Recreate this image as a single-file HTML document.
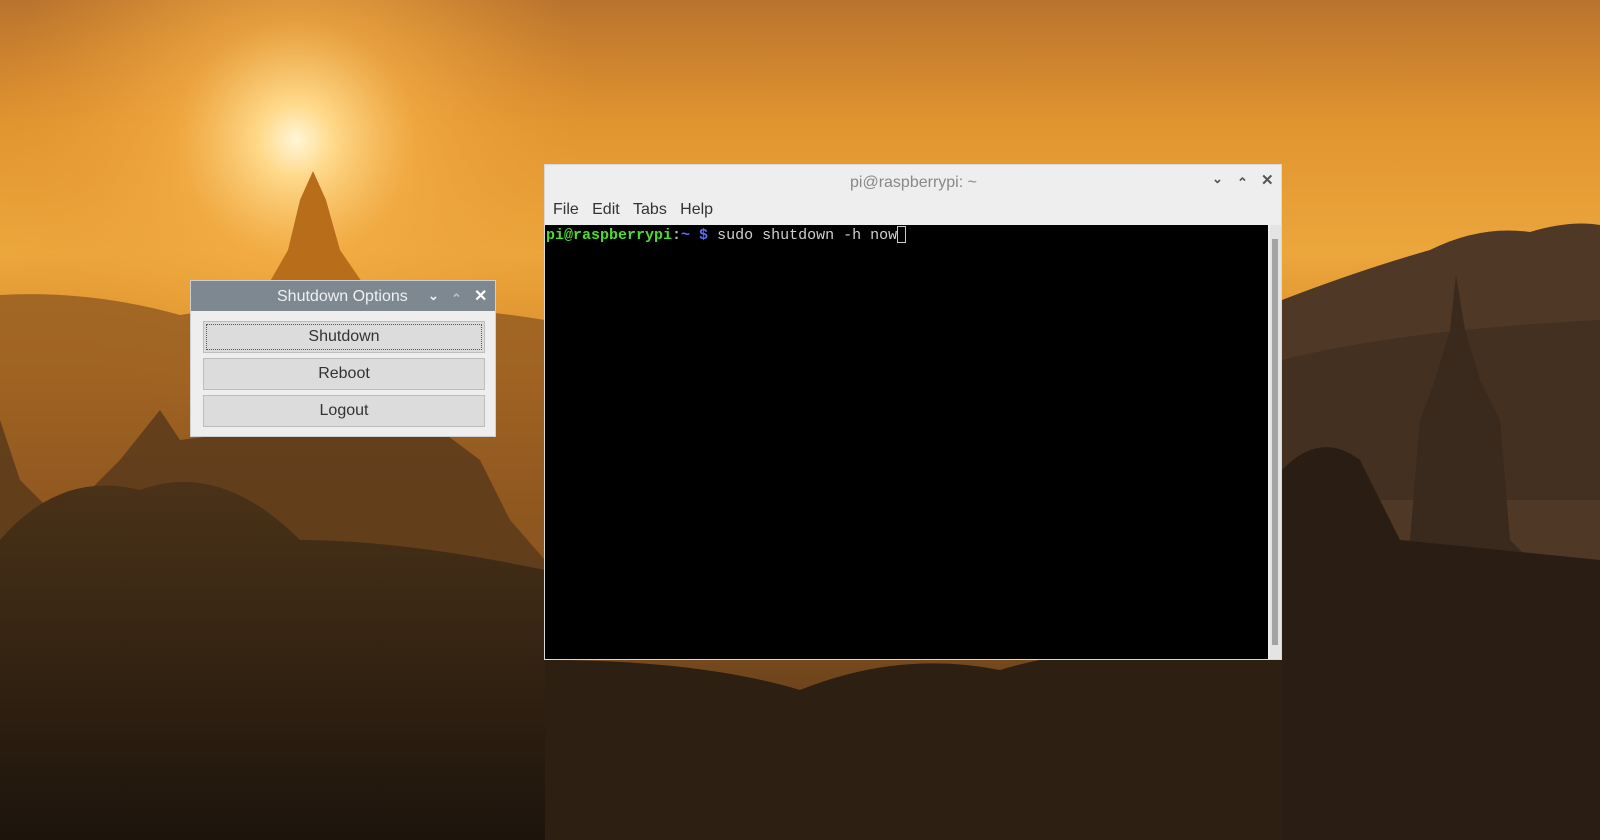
<!DOCTYPE html>
<html><head><style>
*{margin:0;padding:0;box-sizing:border-box}
body{width:1600px;height:840px;overflow:hidden;position:relative;font-family:"Liberation Sans",sans-serif;background:#2a1b10}
#bg{position:absolute;left:0;top:0}
.win{position:absolute;background:#eeeeee}
.t{position:absolute;color:#777;font-size:16px}
.ctl{position:absolute;font-size:13px;color:#555;font-weight:bold}
.btn{position:absolute;left:12px;width:282px;height:32px;background:#dcdcdc;border:1px solid #bdbdbd;font-size:16px;color:#333;text-align:center;line-height:30px}
</style></head><body>
<svg id="bg" width="1600" height="840" viewBox="0 0 1600 840">
<defs>
<linearGradient id="sky" x1="0" y1="0" x2="0" y2="1">
<stop offset="0" stop-color="#b9732e"/><stop offset="0.15" stop-color="#e2952f"/><stop offset="0.3" stop-color="#eba63c"/><stop offset="0.45" stop-color="#d98a2a"/><stop offset="0.6" stop-color="#9c5e22"/><stop offset="1" stop-color="#4a3018"/></linearGradient>
<radialGradient id="sun" cx="296" cy="140" r="300" gradientUnits="userSpaceOnUse">
<stop offset="0" stop-color="#fff6d8"/><stop offset="0.12" stop-color="#ffda8c"/><stop offset="0.4" stop-color="#f4ad45" stop-opacity="0.7"/><stop offset="1" stop-color="#e89a34" stop-opacity="0"/></radialGradient>
<linearGradient id="ground" x1="0" y1="0" x2="0" y2="1"><stop offset="0" stop-color="#4a3218"/><stop offset="1" stop-color="#1d140c"/></linearGradient>
</defs>
<rect width="1600" height="840" fill="url(#sky)"/>
<rect width="1600" height="840" fill="url(#sun)"/>
<path d="M0 295 Q90 290 180 315 L280 300 Q420 300 545 320 L545 840 L0 840Z" fill="#8c5520" opacity="0.75"/>
<path d="M1282 300 Q1360 270 1430 250 Q1480 225 1530 232 Q1570 220 1600 225 L1600 840 L1282 840Z" fill="#4f3825"/>
<path d="M1282 360 Q1400 330 1600 320 L1600 500 L1282 500Z" fill="#3e2c1e" opacity="0.6"/>
<path d="M300 200 L313 171 L326 200 L340 250 L364 285 L268 285 L288 250Z" fill="#b86d1b"/>
<path d="M1456 275 L1450 330 L1435 380 L1420 420 L1410 540 L1360 560 L1530 560 L1510 540 L1500 420 L1480 380 L1465 330Z" fill="#3a291d"/>
<path d="M0 420 L20 480 L60 520 L120 460 L160 410 L180 440 L260 430 L300 420 L440 430 L480 460 L510 520 L545 560 L545 840 L0 840Z" fill="#5a3a1b" opacity="0.85"/>
<path d="M0 540 Q60 470 140 490 Q220 460 300 540 Q400 540 545 570 L545 840 L0 840Z" fill="url(#ground)"/>
<path d="M545 660 Q700 660 800 690 Q900 650 1000 670 Q1100 640 1282 640 L1282 840 L545 840Z" fill="#2d1f12"/>
<path d="M1282 470 Q1320 430 1360 460 L1400 540 L1600 560 L1600 840 L1282 840Z" fill="#2a1e14"/>
</svg>

<div class="win" style="left:190px;top:280px;width:306px;height:157px;background:#eeeeee;border:1px solid #cfcfcf">
 <div style="position:absolute;left:0;top:0;width:304px;height:30px;background:#7e8891"></div>
 <div class="t" style="left:86px;top:7px;color:#eef0f2">Shutdown Options</div>
 <div class="ctl" style="left:237px;top:7px;color:#eef0f2">&#8964;</div>
 <div class="ctl" style="left:260px;top:10px;color:#b8bec4">&#8963;</div>
 <div class="ctl" style="left:283px;top:5px;color:#fff;font-size:16px">&#10005;</div>
 <div class="btn" style="top:40px;outline:1px dotted #555;outline-offset:-4px">Shutdown</div>
 <div class="btn" style="top:77px">Reboot</div>
 <div class="btn" style="top:114px">Logout</div>
</div>

<div class="win" style="left:544px;top:164px;width:738px;height:496px;border:1px solid #d8d8d8">
 <div class="t" style="left:305px;top:9px;color:#888">pi@raspberrypi: ~</div>
 <div class="ctl" style="left:667px;top:6px">&#8964;</div>
 <div class="ctl" style="left:692px;top:10px">&#8963;</div>
 <div class="ctl" style="left:716px;top:6px;font-size:15px">&#10005;</div>
 <div style="position:absolute;left:8px;top:36px;font-size:16px;color:#333;word-spacing:0">File&nbsp;&nbsp;&nbsp;Edit&nbsp;&nbsp;&nbsp;Tabs&nbsp;&nbsp;&nbsp;Help</div>
 <div style="position:absolute;left:0;top:60px;width:723px;height:434px;background:#000"></div>
 <div style="position:absolute;left:725px;top:60px;width:11px;height:434px;background:#e4e4e4"></div>
 <div style="position:absolute;left:727px;top:74px;width:6px;height:406px;background:#a3a3a3"></div>
 <div style="position:absolute;left:1px;top:61px;font-family:'Liberation Mono',monospace;font-size:15px;line-height:18px;color:#d0d0d0;white-space:pre"><b style="color:#4ddc2c">pi@raspberrypi</b><b style="color:#bbb">:</b><b style="color:#5a6cff">~ $</b> sudo shutdown -h now<span style="display:inline-block;width:9px;height:17px;border:1px solid #ccc;vertical-align:-4px"></span></div>
</div>
</body></html>
